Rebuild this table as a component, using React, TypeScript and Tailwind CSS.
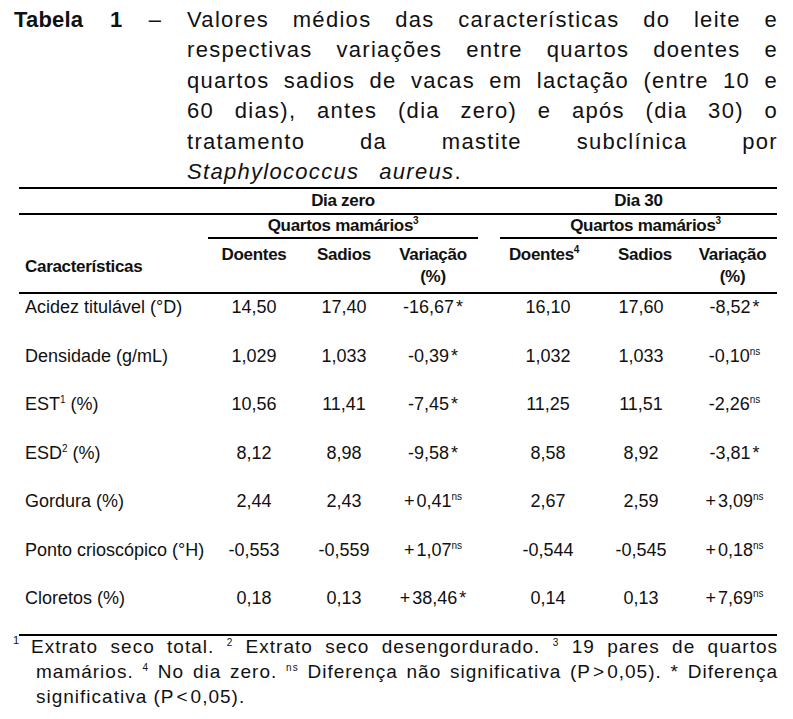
import React from "react";

const cols = "grid grid-cols-[189px_92px_88px_90px_22px_96px_90px_91px]";

type Cell = string | { n: string; m: "*" | "ns" };

const Sup = ({ children }: { children: React.ReactNode }) => (
  <span className="relative -top-[7px] text-[10px] leading-none">{children}</span>
);

const Num = ({ s }: { s: string }) =>
  s.startsWith("+") ? (
    <>
      +<span className="ml-[2px]">{s.slice(1)}</span>
    </>
  ) : (
    <>{s}</>
  );

const Val = ({ c }: { c: Cell }) => {
  if (typeof c === "string") return <>{c}</>;
  return (
    <>
      <Num s={c.n} />
      {c.m === "*" ? <span className="ml-[2px]">*</span> : <Sup>ns</Sup>}
    </>
  );
};

const rows: { label: React.ReactNode; v: Cell[] }[] = [
  { label: <>Acidez titulável (°D)</>, v: ["14,50", "17,40", { n: "-16,67", m: "*" }, "16,10", "17,60", { n: "-8,52", m: "*" }] },
  { label: <>Densidade (g/mL)</>, v: ["1,029", "1,033", { n: "-0,39", m: "*" }, "1,032", "1,033", { n: "-0,10", m: "ns" }] },
  { label: <>EST<Sup>1</Sup> (%)</>, v: ["10,56", "11,41", { n: "-7,45", m: "*" }, "11,25", "11,51", { n: "-2,26", m: "ns" }] },
  { label: <>ESD<Sup>2</Sup> (%)</>, v: ["8,12", "8,98", { n: "-9,58", m: "*" }, "8,58", "8,92", { n: "-3,81", m: "*" }] },
  { label: <>Gordura (%)</>, v: ["2,44", "2,43", { n: "+0,41", m: "ns" }, "2,67", "2,59", { n: "+3,09", m: "ns" }] },
  { label: <>Ponto crioscópico (°H)</>, v: ["-0,553", "-0,559", { n: "+1,07", m: "ns" }, "-0,544", "-0,545", { n: "+0,18", m: "ns" }] },
  { label: <>Cloretos (%)</>, v: ["0,18", "0,13", { n: "+38,46", m: "*" }, "0,14", "0,13", { n: "+7,69", m: "ns" }] },
];

const J = "text-justify [text-align-last:justify]";

export default function App() {
  return (
    <div className="w-[793px] h-[719px] overflow-hidden bg-white text-[#111] font-['Liberation_Sans',Arial,sans-serif]">
      {/* Title */}
      <div className="flex pt-[5px]">
        <div className="ml-[14px] w-[147px] h-[30.4px] flex justify-between text-[22px] leading-[30.4px]">
          <span className="font-bold tracking-[0.2px]">Tabela</span>
          <span className="font-bold">1</span>
          <span>–</span>
        </div>
        <div className="ml-[26px] w-[591px] text-[22px] leading-[30.4px] tracking-[1.3px]">
          <div className={J}>Valores médios das características do leite e</div>
          <div className={J}>respectivas variações entre quartos doentes e</div>
          <div className={J}>quartos sadios de vacas em lactação (entre 10 e</div>
          <div className={J}>60 dias), antes (dia zero) e após (dia 30) o</div>
          <div className={J}>tratamento da mastite subclínica por</div>
          <div className="italic">
            Staphylococcus<span className="ml-[20px]">aureus</span>
            <span className="not-italic">.</span>
          </div>
        </div>
      </div>

      {/* Table */}
      <div className="ml-[19px] w-[758px]">
        <div className="h-[2px] bg-black" />
        <div className={`${cols} h-[24px] items-center text-[17px] font-bold tracking-[-0.3px] leading-[24px]`}>
          <div className="col-start-2 col-span-3 text-center">Dia zero</div>
          <div className="col-start-6 col-span-3 text-center">Dia 30</div>
        </div>
        <div className="h-[2px] bg-black" />
        <div className={`${cols} h-[22px] items-center text-[17px] font-bold tracking-[-0.3px] leading-[22px]`}>
          <div className="col-start-2 col-span-3 text-center">
            Quartos mamários<Sup>3</Sup>
          </div>
          <div className="col-start-6 col-span-3 text-center pl-[14px]">
            Quartos mamários<Sup>3</Sup>
          </div>
        </div>
        <div className={`${cols} h-[2px]`}>
          <div className="col-start-2 col-span-3 bg-black" />
          <div className="col-start-6 col-span-3 bg-black" />
        </div>
        <div className={`${cols} h-[53px] pt-[5px] text-[17px] font-bold tracking-[-0.3px] leading-[22px]`}>
          <div className="self-center pl-[6px] -mt-[2px]">Características</div>
          <div className="text-center">Doentes</div>
          <div className="text-center">Sadios</div>
          <div className="text-center">
            <div>Variação</div>
            <div>(%)</div>
          </div>
          <div />
          <div className="text-center pr-[8px]">
            Doentes<Sup>4</Sup>
          </div>
          <div className="text-center pl-[8px]">Sadios</div>
          <div className="text-center pl-[2px]">
            <div>Variação</div>
            <div>(%)</div>
          </div>
        </div>
        <div className="h-[2px] bg-black" />
        {rows.map((r, i) => (
          <div key={i} className={`${cols} h-[48.5px] pt-[2px] text-[18px] leading-[22px]`}>
            <div className="pl-[6px] whitespace-nowrap">{r.label}</div>
            <div className="text-center">
              <Val c={r.v[0]} />
            </div>
            <div className="text-center">
              <Val c={r.v[1]} />
            </div>
            <div className="text-center">
              <Val c={r.v[2]} />
            </div>
            <div />
            <div className="text-center">
              <Val c={r.v[3]} />
            </div>
            <div className="text-center">
              <Val c={r.v[4]} />
            </div>
            <div className="text-center pl-[6px]">
              <Val c={r.v[5]} />
            </div>
          </div>
        ))}
        <div className="h-[2px] bg-black" />
      </div>

      {/* Footnotes */}
      <div className="-mt-[2px] text-[19px] leading-[25px] tracking-[1px]">
        <div className="flex">
          <span className="ml-[13px] w-[18px] relative -top-[6px] text-[11px] leading-[25px]">1</span>
          <div className={`w-[747px] ${J}`}>
            Extrato seco total. <Sup>2</Sup> Extrato seco desengordurado. <Sup>3</Sup> 19 pares de quartos
          </div>
        </div>
        <div className={`ml-[36px] w-[742px] ${J}`}>
          mamários. <Sup>4</Sup> No dia zero. <Sup>ns</Sup> Diferença não significativa (P<span className="mx-[2px]">&gt;</span>0,05). * Diferença
        </div>
        <div className="ml-[36px]">
          significativa (P<span className="mx-[2px]">&lt;</span>0,05).
        </div>
      </div>
    </div>
  );
}
